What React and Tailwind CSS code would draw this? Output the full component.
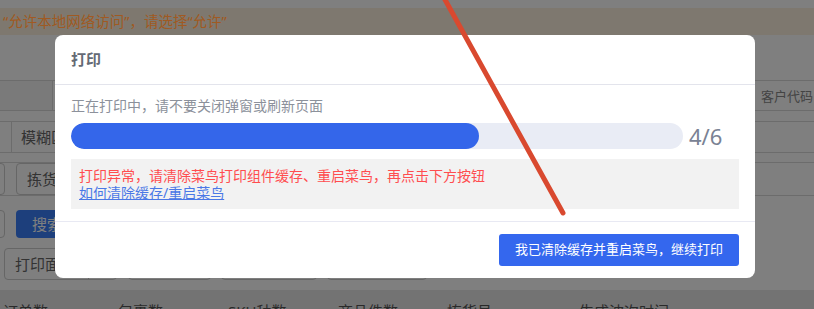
export default function App() {
  const done = 4;
  const total = 6;

  return (
    <div className="relative h-[309px] w-[814px] overflow-hidden bg-white font-['Noto_Sans','Noto_Sans_CJK_SC',sans-serif]">
      {/* page behind the mask */}
      <div className="h-2 bg-white" />
      <div className="relative z-20 h-[27px] bg-[#7e786f] pl-[3px] text-[14.5px] leading-[27px] text-[#a05a22]">
        “允许本地网络访问”，请选择“允许”
      </div>
      <div className="h-[46px] border-b border-[#d8d8d8]" />
      <div className="flex h-[30px] border-b border-[#d8d8d8]">
        <div className="w-[53px] border-r border-[#d8d8d8] bg-[#f5f5f5]" />
        <div className="flex-1" />
        <div className="w-[59px] whitespace-nowrap pl-[6px] text-[13px] leading-[30px] text-[#888]">客户代码</div>
      </div>
      <div className="h-[11px] border-b border-[#d8d8d8]" />
      <div className="flex h-[31px] border-b border-[#d8d8d8]">
        <div className="w-[12px] border-r border-[#d8d8d8]" />
        <div className="w-[120px] border-r border-[#d8d8d8] pl-[9px] text-[15px] leading-[30px] text-[#666]">模糊匹配</div>
      </div>
      <div className="h-[10px] border-b border-[#d8d8d8]" />
      <div className="flex h-[33px] items-center gap-[11px] border-b border-[#d8d8d8]">
        <div className="-ml-[10px] h-[32px] w-[15px] rounded border border-[#ccc]" />
        <div className="flex h-[32px] w-[110px] items-center rounded border border-[#ccc] pl-[10px] text-[15px] text-[#666]">拣货波次</div>
      </div>
      <div className="mt-[14px] flex h-[28px] items-center gap-[11px]">
        <div className="-ml-[10px] h-[28px] w-[15px] rounded border border-[#ccc]" />
        <div className="flex h-[28px] w-[80px] items-center rounded bg-[#3a7ef8] pl-[16px] text-[15px] text-white">搜索</div>
      </div>
      <div className="mt-[10px] flex h-[32px] items-center pl-[4px]">
        <div className="flex h-[32px] w-[113px] rounded border border-[#ccc]">
          <div className="w-[84px] border-r border-[#ccc] pl-[10px] text-[15px] leading-[30px] text-[#666]">打印面单</div>
        </div>
        <div className="ml-[11px] h-[32px] w-[83px] rounded border border-[#ccc]" />
        <div className="ml-[10px] h-[32px] w-[96px] rounded border border-[#ccc]" />
        <div className="ml-[10px] h-[32px] w-[100px] rounded border border-[#ccc]" />
      </div>
      <div className="mt-[10px] flex h-[40px] bg-[#e6e6e6] pl-[3px] pt-[11px] text-[15px] leading-[20px] text-[#555]">
        <div className="w-[115px]">订单数</div>
        <div className="w-[110px]">包裹数</div>
        <div className="w-[110px]">SKU种数</div>
        <div className="w-[109px]">商品件数</div>
        <div className="w-[132px]">拣货员</div>
        <div>生成波次时间</div>
      </div>

      {/* mask */}
      <div className="absolute inset-0 z-10 bg-black/50" />

      {/* dialog */}
      <div className="absolute left-[55px] top-[35px] z-30 flex w-[700px] flex-col rounded-lg bg-white">
        <div className="flex h-[50px] items-center border-b border-[#e3e4ec] px-4 text-[15px] font-bold text-[#646a75]">
          打印
        </div>
        <div className="border-b border-[#e8e9f3] px-4 pb-3 pt-[11px]">
          <div className="text-[14px] leading-[20px] text-[#8c919b]">正在打印中，请不要关闭弹窗或刷新页面</div>
          <div className="mt-[7px] flex items-center gap-[6px]">
            <div className="h-[26px] w-[612px] overflow-hidden rounded-full bg-[#e9ecf5]">
              <div
                className="h-full rounded-full bg-[#3466ea]"
                style={{ width: `${(done / total) * 100}%` }}
              />
            </div>
            <span className="text-[22px] leading-[26px] text-[#7a8294]">
              {done}/{total}
            </span>
          </div>
          <div className="mt-[10px] h-[50px] bg-[#f2f2f2] px-2 pt-[8px] text-[14px] leading-[17px]">
            <p className="text-[#ff4d4f]">打印异常，请清除菜鸟打印组件缓存、重启菜鸟，再点击下方按钮</p>
            <a href="#" className="text-[#4a78e6] underline">如何清除缓存/重启菜鸟</a>
          </div>
        </div>
        <div className="flex justify-end px-4 py-3">
          <button className="h-8 w-[240px] rounded-[3px] bg-[#3467ee] text-[13px] text-white">
            我已清除缓存并重启菜鸟，继续打印
          </button>
        </div>
      </div>

      {/* annotation stroke */}
      <svg className="pointer-events-none absolute inset-0 z-40" width="814" height="309">
        <line x1="443" y1="-4" x2="563" y2="213" stroke="#d9492f" strokeWidth="5" strokeLinecap="round" />
      </svg>
    </div>
  );
}
